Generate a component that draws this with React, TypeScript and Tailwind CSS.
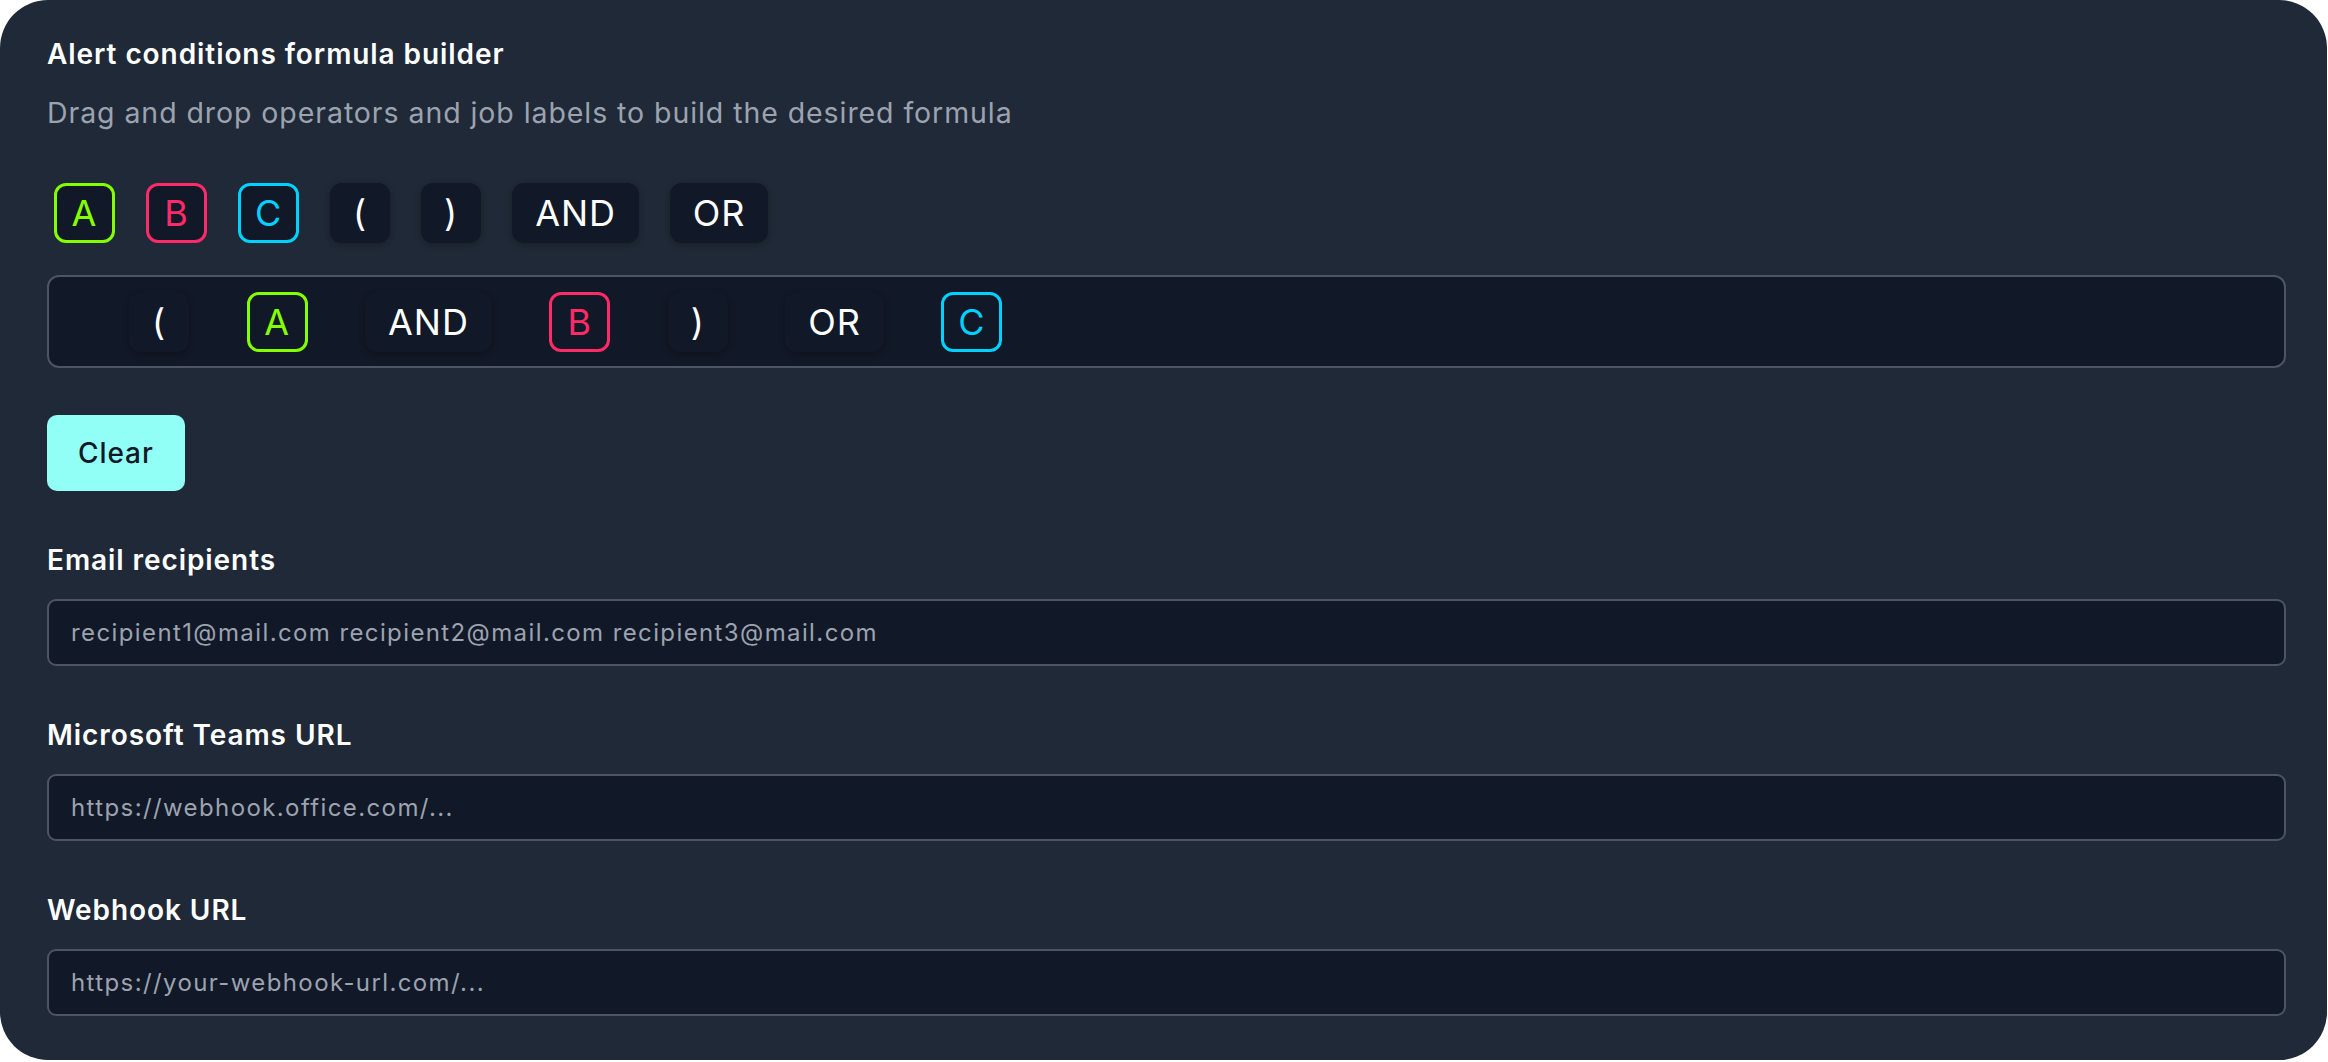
import React from 'react';

type Token = { label: string; kind: 'A' | 'B' | 'C' | 'op' };

const palette: Token[] = [
  { label: 'A', kind: 'A' },
  { label: 'B', kind: 'B' },
  { label: 'C', kind: 'C' },
  { label: '(', kind: 'op' },
  { label: ')', kind: 'op' },
  { label: 'AND', kind: 'op' },
  { label: 'OR', kind: 'op' },
];

const formula: Token[] = [
  { label: '(', kind: 'op' },
  { label: 'A', kind: 'A' },
  { label: 'AND', kind: 'op' },
  { label: 'B', kind: 'B' },
  { label: ')', kind: 'op' },
  { label: 'OR', kind: 'op' },
  { label: 'C', kind: 'C' },
];

function Chip({ token }: { token: Token }) {
  if (token.kind === 'op') {
    return (
      <div className="flex h-[60px] items-center justify-center rounded-[12px] bg-[#111827] px-[23px] text-[36px] leading-none text-white shadow-[0_2px_6px_rgba(0,0,0,0.25)]">
        {token.label}
      </div>
    );
  }
  const color =
    token.kind === 'A'
      ? 'border-[#84ff00] text-[#84ff00]'
      : token.kind === 'B'
        ? 'border-[#ff2a68] text-[#ff2a68]'
        : 'border-[#00d2ff] text-[#00d2ff]';
  return (
    <div
      className={`flex h-[60px] w-[61px] items-center justify-center rounded-[12px] border-[3px] bg-[#111827] text-[36px] leading-none ${color}`}
    >
      {token.label}
    </div>
  );
}

function Field({ label, placeholder }: { label: string; placeholder: string }) {
  return (
    <div className="mt-[48px] first:mt-0">
      <label className="block text-[28px] leading-[42px] font-semibold text-white">{label}</label>
      <input
        className="mt-[18px] block h-[67px] w-full rounded-[9px] border-2 border-[#4b5563] bg-[#111827] px-[22px] text-[24px] tracking-[0.058em] text-white outline-none placeholder:text-[#9ca3af]"
        placeholder={placeholder}
      />
    </div>
  );
}

export default function App() {
  return (
    <div className="min-h-screen bg-white font-['Inter','Noto_Sans',sans-serif] tracking-[0.058em]">
      <div className="w-[2327px] rounded-[48px] bg-[#1f2937] pt-[33px] pr-[41px] pb-[44px] pl-[47px]">
        <h2 className="text-[28px] leading-[42px] font-semibold text-white">Alert conditions formula builder</h2>
        <p className="mt-[20px] text-[28.5px] leading-[36px] text-[#9ca3af]">
          Drag and drop operators and job labels to build the desired formula
        </p>

        {/* Palette */}
        <div className="mt-[52px] flex gap-[31px] pl-[7px]">
          {palette.map((t, i) => (
            <Chip key={i} token={t} />
          ))}
        </div>

        {/* Formula drop zone */}
        <div className="mt-[32px] flex h-[93px] items-center gap-[57.5px] rounded-[12px] border-2 border-[#4b5563] bg-[#111827] pl-[80px]">
          {formula.map((t, i) => (
            <Chip key={i} token={t} />
          ))}
        </div>

        <button className="mt-[47px] flex h-[76px] items-center rounded-[10px] bg-[#91fff6] px-[31px] text-[28px] font-medium text-[#111827]">
          Clear
        </button>

        <div className="mt-[48px]">
          <Field label="Email recipients" placeholder="recipient1@mail.com recipient2@mail.com recipient3@mail.com" />
          <Field label="Microsoft Teams URL" placeholder="https://webhook.office.com/..." />
          <Field label="Webhook URL" placeholder="https://your-webhook-url.com/..." />
        </div>
      </div>
    </div>
  );
}
